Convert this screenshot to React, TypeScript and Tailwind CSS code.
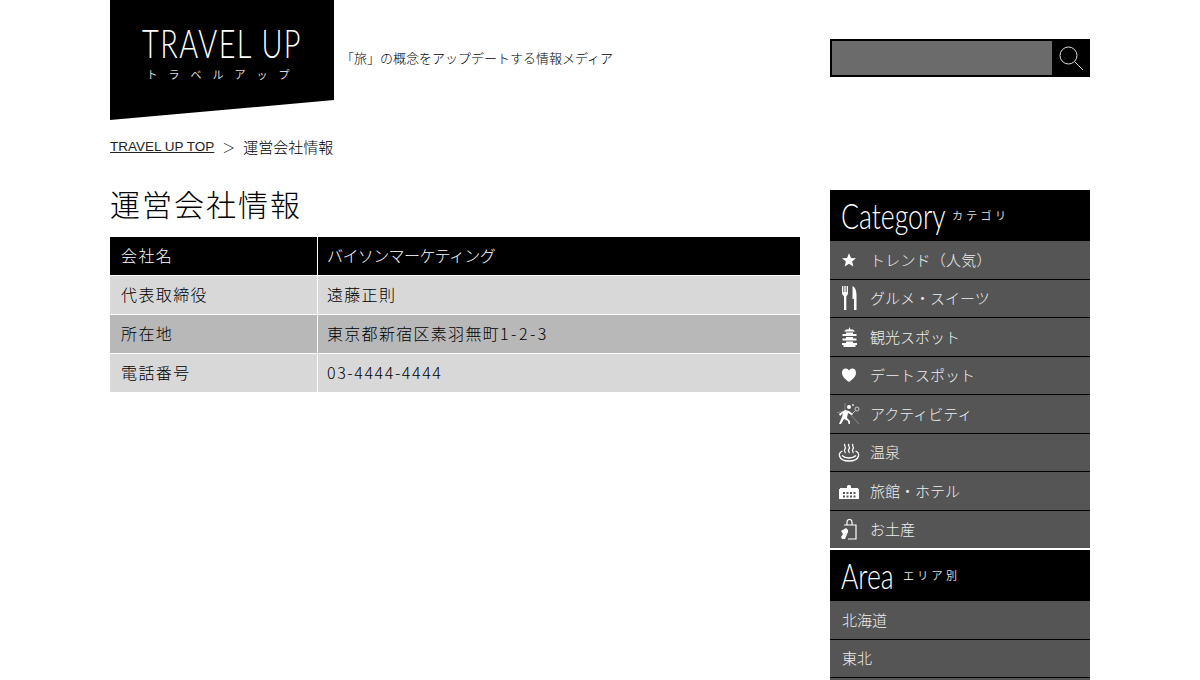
const cjk = "font-['Noto_Sans_CJK_JP','Noto_Sans',sans-serif]";

const tableRows = [
  { label: "会社名", value: "バイソンマーケティング", tone: "bg-black text-white", valueClass: "tracking-[-0.6px]" },
  { label: "代表取締役", value: "遠藤正則", tone: "bg-[#d8d8d8] text-black", valueClass: "tracking-[1.3px]" },
  {
    label: "所在地",
    value: (
      <>
        東京都新宿区素羽無町<span className="tracking-[2.500px]">1-2-3</span>
      </>
    ),
    tone: "bg-[#b8b8b8] text-black",
    valueClass: "tracking-[1.3px]",
  },
  { label: "電話番号", value: "03-4444-4444", tone: "bg-[#d8d8d8] text-black", valueClass: "tracking-[1.6px]" },
];

function StarIcon() {
  return (
    <svg width="16" height="16" viewBox="0 0 18 18" fill="#fff">
      <path d="M9 1.5l2.2 5.2 5.6.4-4.3 3.6 1.4 5.5L9 13.2l-4.9 3 1.4-5.5L1.2 7.1l5.6-.4z" />
    </svg>
  );
}

function ForkIcon() {
  return (
    <svg width="15" height="24" viewBox="0 0 15 24" fill="#fff">
      <path d="M0 0h1.300v6h1V0h1.400v6h1V0H6v8L4.300 10.500V24H2V10.500L0 8z" />
      <path d="M10.500 0C13 1 14.500 4 14.500 9v15H12V13h-1.500z" />
    </svg>
  );
}

function PagodaIcon() {
  return (
    <svg width="17" height="20" viewBox="0 0 17 20" fill="#fff">
      <path d="M8.500 0l1 2.500h2.500l2 2H3l2-2h2.500z" />
      <path d="M5 5.500h7v1.500h3.500v2h-14V7H5z" />
      <path d="M5 10h7v1.500h3.500v2h-14v-2H5z" />
      <path d="M5 14.500h7V16h4v2h-1.500v2h-12v-2H1v-2h4z" />
    </svg>
  );
}

function HeartIcon() {
  return (
    <svg width="18" height="18" viewBox="0 0 18 18" fill="#fff">
      <path d="M9 16C5 13 2 10.500 2 6.500 2 4 3.800 2.500 5.600 2.500 7.200 2.500 8.300 3.400 9 4.700 9.700 3.400 10.800 2.500 12.400 2.500 14.200 2.500 16 4 16 6.500 16 10.500 13 13 9 16z" />
    </svg>
  );
}

function ActivityIcon() {
  return (
    <svg width="26" height="24" viewBox="0 0 26 24" fill="none">
      <path d="M9 1v8M1 11l6-2M14 12l9 10" stroke="#888" strokeWidth="1" />
      <circle cx="13" cy="5" r="2" fill="#fff" />
      <path d="M3 12l6-4 4 1 4 3-1 1-4-2-1 5 3 3v3h-1.500l-.5-3-4-2-3 5H3l3-7 1-4-3 3z" fill="#fff" />
      <circle cx="21" cy="7" r="2" stroke="#ccc" strokeWidth="1" />
      <path d="M19.500 8.500L16 12" stroke="#ccc" strokeWidth="1" />
      <circle cx="17" cy="3" r="1" fill="#ddd" />
    </svg>
  );
}

function OnsenIcon() {
  return (
    <svg width="22" height="19" viewBox="0 0 22 19" fill="none" stroke="#fff" strokeWidth="1.300">
      <path d="M7 1c-2 2 2 3 0 5s1 3 0 4M11 1c-2 2 2 3 0 5s1 3 0 4M15 1c-2 2 2 3 0 5s1 3 0 4" />
      <path d="M4.500 8C2 9 1 10.500 1.500 13 2.500 16.500 7 18 11 18s8.500-1.500 9.500-5c.5-2.500-.5-4-3-5" />
      <path d="M4 12.500c2 2 5 2.500 7 2.500s5-.5 7-2.500" />
    </svg>
  );
}

function HotelIcon() {
  return (
    <svg width="20" height="16" viewBox="0 0 20 16">
      <path d="M8 3a2.500 2.500 0 0 1 4 0v2h7v1h1v10H0V6h1V5h7z" fill="#fff" />
      <path d="M4 9h2v2H4zM7.500 9h2v2h-2zM11 9h2v2h-2zM14.500 9h2v2h-2zM4 12.500h2v2H4zM7.500 12.500h2v2h-2zM11 12.500h2v2h-2zM14.500 12.500h2v2h-2z" fill="#555" />
    </svg>
  );
}

function BagIcon() {
  return (
    <svg width="18" height="21" viewBox="0 0 18 21" fill="none">
      <path d="M4 6h12v14H8" stroke="#fff" strokeWidth="1.200" />
      <path d="M7 6V3a2.500 2.500 0 0 1 5 0v3" stroke="#fff" strokeWidth="1.200" />
      <path d="M1 12l5-3 2 2v2l-3 7H2l-1-2 2-3z" fill="#fff" />
    </svg>
  );
}

const categories = [
  { label: "トレンド（人気）", icon: <StarIcon />, labelClass: "tracking-[0.2px]" },
  { label: "グルメ・スイーツ", icon: <ForkIcon />, labelClass: "" },
  { label: "観光スポット", icon: <PagodaIcon />, labelClass: "" },
  { label: "デートスポット", icon: <HeartIcon />, labelClass: "" },
  { label: "アクティビティ", icon: <ActivityIcon />, labelClass: "" },
  { label: "温泉", icon: <OnsenIcon />, labelClass: "" },
  { label: "旅館・ホテル", icon: <HotelIcon />, labelClass: "" },
  { label: "お土産", icon: <BagIcon />, labelClass: "" },
];

function SideHeading({ title, sub, width }: { title: string; sub: string; width: string }) {
  return (
    <div className="flex h-[51px] items-center bg-black pl-[11px] text-white">
      <span className={`${width} origin-left scale-x-[0.76] whitespace-nowrap font-['Lato',sans-serif] text-[35px] font-light leading-none`}>
        {title}
      </span>
      <span className={`${cjk} text-[11px] font-normal tracking-[3.300px] text-[#ddd]`}>{sub}</span>
    </div>
  );
}

export default function App() {
  return (
    <div className={`${cjk} h-[680px] overflow-hidden bg-white font-light text-black`}>
      <div className="mx-auto w-[980px]">
        <header className="flex h-[120px]">
          <div className="flex h-[120px] w-[224px] flex-col items-center bg-black pt-[22px] text-white [clip-path:polygon(0_0,100%_0,100%_100px,0_100%)]">
            <div className="origin-center scale-x-[0.74] whitespace-nowrap font-['Lato',sans-serif] text-[39px] font-light leading-[43px] tracking-[2px]">
              TRAVEL UP
            </div>
            <div className="mt-[2px] pl-[3px] text-[11px] font-normal leading-[14px] tracking-[11px] text-[#ddd]">トラベルアップ</div>
          </div>
          <p className="ml-[7px] mt-[48px] text-[13px] leading-[20px]">「旅」の概念をアップデートする情報メディア</p>
          <form className="ml-auto mt-[39px] flex h-[38px] w-[260px] border-2 border-black bg-black">
            <input className="h-full w-[220px] bg-[#6b6b6b] outline-none" />
            <button type="button" className="flex flex-1 items-center justify-center pl-[1px]">
              <svg width="28" height="28" viewBox="0 0 28 28" fill="none" stroke="#ddd">
                <circle cx="11.500" cy="11.500" r="8.500" strokeWidth="1" />
                <path d="M18 18l8 8" strokeWidth="1" />
              </svg>
            </button>
          </form>
        </header>

        <nav className="mt-[17px] flex h-[20px] items-center text-[14px] leading-[20px]">
          <a className="font-['Liberation_Sans',sans-serif] text-[13.500px] text-[#222] underline">TRAVEL UP TOP</a>
          <span className="ml-[8px] text-[13px]">＞</span>
          <span className="ml-[8px] text-[15px]">運営会社情報</span>
        </nav>

        <div className="mt-[33px] flex justify-between">
          <main className="w-[690px]">
            <h1 className="-mt-[2px] text-[30px] font-light leading-[30px] tracking-[2px]">運営会社情報</h1>
            <table className="mt-[19px] w-full border-separate border-spacing-0 text-[16px]">
              <tbody>
                {tableRows.map((row) => (
                  <tr key={row.label} className={row.tone}>
                    <th className="h-[39px] w-[208px] border-r border-b border-white pb-[3px] pl-[11px] text-left font-light tracking-[1.400px]">{row.label}</th>
                    <td className={`h-[39px] border-b border-white pb-[3px] pl-[9px] ${row.valueClass}`}>{row.value}</td>
                  </tr>
                ))}
              </tbody>
            </table>
          </main>

          <aside className="w-[260px] text-[15px] text-[#eee]">
            <SideHeading title="Category" sub="カテゴリ" width="w-[111px]" />
            <ul>
              {categories.map((item) => (
                <li key={item.label} className={`relative flex h-[38.500px] items-center border-b border-black bg-[#555] pl-[40px] last:h-[37.500px] last:border-b-0 ${item.labelClass}`}>
                  <span className="absolute left-0 top-0 flex h-full w-[38px] items-center justify-center">{item.icon}</span>
                  {item.label}
                </li>
              ))}
            </ul>
            <div className="mt-[2px]">
              <SideHeading title="Area" sub="エリア別" width="w-[62px]" />
            </div>
            <ul>
              {["北海道", "東北"].map((area) => (
                <li key={area} className="flex h-[38.500px] items-center border-b border-black bg-[#555] pl-[12px]">
                  {area}
                </li>
              ))}
              <li className="h-[38.500px] bg-[#555]" />
            </ul>
          </aside>
        </div>
      </div>
    </div>
  );
}
